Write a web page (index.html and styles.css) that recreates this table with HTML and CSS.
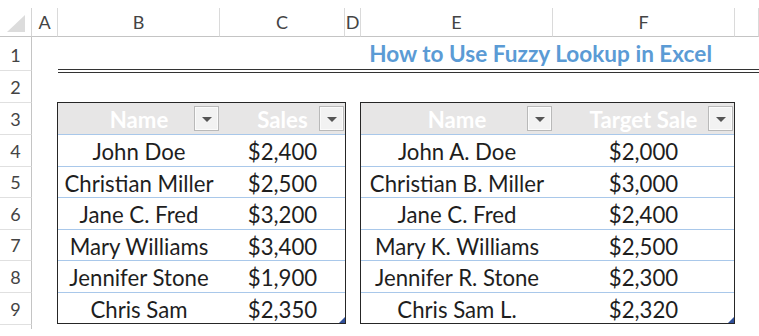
FILE: index.html
```html
<!DOCTYPE html>
<html>
<head>
<meta charset="utf-8">
<link rel="stylesheet" href="styles.css">
</head>
<body>
<div class="sheet">
  <div class="corner"><span class="tri"></span></div>
  <div class="colh">A</div>
  <div class="colh">B</div>
  <div class="colh">C</div>
  <div class="colh">D</div>
  <div class="colh">E</div>
  <div class="colh">F</div>
  <div class="colh"></div>

  <div class="rowh r1">1</div>
  <div class="rowh r2">2</div>
  <div class="rowh r3">3</div>
  <div class="rowh r4">4</div>
  <div class="rowh r5">5</div>
  <div class="rowh r6">6</div>
  <div class="rowh r7">7</div>
  <div class="rowh r8">8</div>
  <div class="rowh r9">9</div>
  <div class="rowh rend"></div>

  <div class="title">How to Use Fuzzy Lookup in Excel</div>
  <div class="dbl"></div>

  <div class="tbl t1">
    <div class="tr th"><div class="td">Name<i class="dd"></i></div><div class="td">Sales<i class="dd"></i></div></div>
    <div class="tr"><div class="td">John Doe</div><div class="td">$2,400</div></div>
    <div class="tr s"><div class="td">Christian Miller</div><div class="td">$2,500</div></div>
    <div class="tr"><div class="td">Jane C. Fred</div><div class="td">$3,200</div></div>
    <div class="tr s"><div class="td">Mary Williams</div><div class="td">$3,400</div></div>
    <div class="tr"><div class="td">Jennifer Stone</div><div class="td">$1,900</div></div>
    <div class="tr last"><div class="td">Chris Sam</div><div class="td">$2,350</div></div>
  </div>

  <div class="tbl t2">
    <div class="tr th"><div class="td">Name<i class="dd"></i></div><div class="td">Target Sale<i class="dd"></i></div></div>
    <div class="tr"><div class="td">John A. Doe</div><div class="td">$2,000</div></div>
    <div class="tr s"><div class="td">Christian B. Miller</div><div class="td">$3,000</div></div>
    <div class="tr"><div class="td">Jane C. Fred</div><div class="td">$2,400</div></div>
    <div class="tr s"><div class="td">Mary K. Williams</div><div class="td">$2,500</div></div>
    <div class="tr"><div class="td">Jennifer R. Stone</div><div class="td">$2,300</div></div>
    <div class="tr last"><div class="td">Chris Sam L.</div><div class="td">$2,320</div></div>
  </div>
</div>
</body>
</html>
```
FILE: styles.css
```css
html, body {
  margin: 0;
  padding: 0;
  background: #fff;
}
body {
  font-family: Lato, "Open Sans", "Liberation Sans", sans-serif;
  color: #222;
}
.sheet {
  width: 759px;
  height: 336px;
  box-sizing: border-box;
  padding-top: 8px;
  display: grid;
  grid-template-columns: 32px 26px 162px 125px 16px 192px 182px 1fr;
  grid-template-rows: 29px 34px 32px 32px 32px 31px 32px 31px 32px 32px 1fr;
  overflow: hidden;
}
.corner {
  grid-column: 1;
  grid-row: 1;
  border-bottom: 1px solid #c4c4c4;
  border-right: 1px solid #d4d4d4;
  position: relative;
}
.tri {
  position: absolute;
  left: 7px;
  top: 7px;
  width: 0;
  height: 0;
  border-left: 18px solid transparent;
  border-bottom: 17px solid #dcdcdc;
}
.colh {
  grid-row: 1;
  border-bottom: 1px solid #c4c4c4;
  border-right: 1px solid #dadada;
  display: flex;
  align-items: center;
  justify-content: center;
  font-size: 18px;
  color: #444;
  box-sizing: border-box;
}
.colh:last-of-type { border-right: 0; }
.rowh {
  grid-column: 1;
  border-right: 1px solid #c4c4c4;
  border-bottom: 1px solid #e0e0e0;
  display: flex;
  align-items: flex-end;
  justify-content: center;
  font-size: 18px;
  line-height: 29px;
  color: #444;
}
.r1 { grid-row: 2; }
.r2 { grid-row: 3; }
.r3 { grid-row: 4; }
.r4 { grid-row: 5; }
.r5 { grid-row: 6; }
.r6 { grid-row: 7; }
.r7 { grid-row: 8; }
.r8 { grid-row: 9; }
.r9 { grid-row: 10; }
.rend { grid-row: 11; border-bottom: 0; height: 4px; }

.title {
  grid-column: 3 / 8;
  grid-row: 2;
  align-self: end;
  text-align: right;
  padding-right: 23px;
  font-weight: 700;
  font-size: 22.6px;
  line-height: 30px;
  color: #5b9bd5;
  margin-bottom: 2px;
  white-space: nowrap;
}
.dbl {
  grid-column: 3 / 9;
  grid-row: 2;
  align-self: end;
  height: 2px;
  border-top: 1px solid #333;
  border-bottom: 1px solid #333;
  margin-bottom: -2px;
  position: relative;
  z-index: 1;
}

.tbl {
  grid-row: 4 / 11;
  align-self: start;
  margin-top: -1px;
  margin-left: -1px;
  border: 1px solid #262626;
  display: flex;
  flex-direction: column;
  position: relative;
  font-size: 22.2px;
}
.t1 { grid-column: 3 / 5; margin-right: -1px; }
.t2 { grid-column: 6 / 8; }
.tbl::after {
  content: "";
  position: absolute;
  right: 0;
  bottom: 0;
  width: 0;
  height: 0;
  border-left: 6px solid transparent;
  border-bottom: 6px solid #2f4f99;
}
.tr {
  display: grid;
  height: 32px;
  box-sizing: border-box;
  border-bottom: 1px solid #a9c8ea;
}
.t1 .tr { grid-template-columns: 162px 1fr; }
.t2 .tr { grid-template-columns: 192px 1fr; }
.tr.s { height: 31px; }
.tr.last { height: 30px; border-bottom: 0; }
.td {
  display: flex;
  align-items: center;
  justify-content: center;
  padding-top: 2px;
  position: relative;
  white-space: nowrap;
  color: #1e1e1e;
}
.th {
  background: #e7e6e6;
}
.th .td {
  color: #fff;
  font-weight: 700;
}
.dd {
  position: absolute;
  right: 1px;
  top: 3px;
  width: 25px;
  height: 25px;
  box-sizing: border-box;
  border: 1px solid #b9b9b9;
  background: #f2f2f2;
  box-shadow: inset 0 0 0 1px #fbfbfb;
  display: flex;
  align-items: center;
  justify-content: center;
}
.dd::before {
  content: "";
  width: 0;
  height: 0;
  margin-top: 2px;
  border-left: 5px solid transparent;
  border-right: 5px solid transparent;
  border-top: 5px solid #555;
}
```
